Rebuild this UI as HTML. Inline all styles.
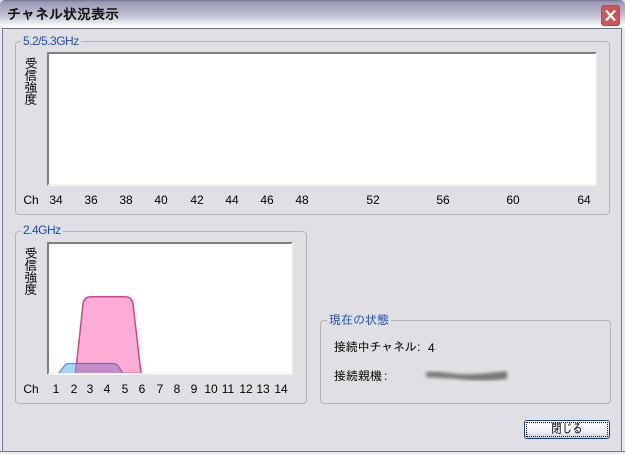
<!DOCTYPE html>
<html><head><meta charset="utf-8"><style>
html,body{margin:0;padding:0;width:625px;height:454px;overflow:hidden;background:#e0dfe3}
body{position:relative;font-family:"Liberation Sans","IPAGothic",sans-serif;font-size:12px;color:#000}
div,span{position:absolute;white-space:nowrap}
.tb{left:0;top:0;width:625px;height:28px;background:linear-gradient(#6f6f8f 0,#9a9ab6 2px,#aeaec6 9px,#c4c4d6 16px,#e4e4ee 22px,#fbfbfd 26px,#fff 27px);border-radius:5px 5px 0 0}
.tl{left:2px;top:28px;width:620px;height:1px;background:#6f6f88}
.lb{left:0;top:28px;width:3px;height:426px;background:linear-gradient(90deg,#e8e8ee 0,#e8e8ee 2px,#77778f 2px)}
.rb{left:621px;top:28px;width:4px;height:426px;background:linear-gradient(90deg,#77778f 0,#77778f 1px,#e8e8ee 1px)}
.bb{left:0;top:451px;width:625px;height:3px;background:linear-gradient(#77778f 0,#77778f 1px,#e8e8ee 1px)}
.bc{left:0;top:452px;width:625px;height:2px;background:#e8e8ee}
.t{left:7px;top:6px;font:bold 14px/16px "IPAGothic","Noto Sans CJK JP",sans-serif;color:#111}
.g{box-sizing:border-box;border:1px solid #b4b4b8;border-radius:4px}
.lg{background:#e0dfe3;color:#1c4fa8;padding:0 2px;font-size:12px;line-height:13px;letter-spacing:-.5px}
.c{background:#fff;box-sizing:border-box;border-top:2px solid #808080;border-left:2px solid #808080;border-right:2px solid #f4f4ec;border-bottom:2px solid #f4f4ec}
.n{font-size:12px;line-height:14px;transform:translateX(-50%);top:0}
.r{top:0;height:14px;left:0;width:625px}
.v{font:13px/12px "IPAGothic","Noto Sans CJK JP",sans-serif;width:14px;text-align:center;white-space:normal}
.j{font:12px/14px "IPAGothic","Noto Sans CJK JP",sans-serif}
</style></head><body>
<div class="tb"></div><div class="tl"></div><div class="lb"></div><div class="rb"></div><div class="bb"></div>
<div class="t">チャネル状況表示</div>
<svg style="position:absolute;left:601px;top:5px" width="19" height="21" viewBox="0 0 19 21"><rect x=".5" y=".5" width="18" height="20" rx="2.5" fill="#c9545a" stroke="#b04a50"/><path d="M5 5.5L14 15.5M14 5.5L5 15.5" stroke="#fff" stroke-width="2.4" fill="none"/></svg>

<div class="g" style="left:15px;top:41px;width:595px;height:174px"></div>
<div class="lg" style="left:21px;top:35px">5.2/5.3GHz</div>
<div class="c" style="left:47px;top:52px;width:550px;height:134px"></div>
<div class="v" style="left:24px;top:58px">受信強度</div>
<div class="r" style="top:193px">
<span class="n" style="left:31px">Ch</span>
<span class="n" style="left:56px">34</span><span class="n" style="left:91px">36</span><span class="n" style="left:126px">38</span><span class="n" style="left:161px">40</span><span class="n" style="left:197px">42</span><span class="n" style="left:232px">44</span><span class="n" style="left:267px">46</span><span class="n" style="left:302px">48</span><span class="n" style="left:373px">52</span><span class="n" style="left:443px">56</span><span class="n" style="left:513px">60</span><span class="n" style="left:584px">64</span>
</div>

<div class="g" style="left:15px;top:231px;width:292px;height:173px"></div>
<div class="lg" style="left:21px;top:224px">2.4GHz</div>
<div class="c" style="left:47px;top:242px;width:246px;height:133px"></div>
<div class="v" style="left:24px;top:248px">受信強度</div>
<svg style="position:absolute;left:49px;top:244px" width="242" height="129" viewBox="49 244 242 129">
<path d="M58.5 373.5L65 365Q66.5 363.5 69 363.5H113Q116 363.5 118 365.5L123 373.5Z" fill="#a8d4f8" stroke="#5c94d0" stroke-width="1.3"/>
<path d="M75.5 373.5L83 304Q84 296.7 91 296.7H125Q132 296.7 133 304L141 373.5Z" fill="#ff9fcf" fill-opacity=".85" stroke="#c84a8e" stroke-width="1.5"/>
<path d="M75.5 373L77 363.5H113Q116 363.5 118 365.5L123 373Z" fill="#c48cc8" stroke="none"/>
<path d="M76.5 363.5H113Q116 363.5 118 365.5L123 373.5" fill="none" stroke="#8a68b0" stroke-width="1.2"/>
<path d="M75.5 373.5H141" stroke="#c84a8e" stroke-width="1" fill="none"/>
</svg>
<div class="r" style="top:382px">
<span class="n" style="left:31px">Ch</span>
<span class="n" style="left:56px">1</span><span class="n" style="left:74px">2</span><span class="n" style="left:90px">3</span><span class="n" style="left:107px">4</span><span class="n" style="left:125px">5</span><span class="n" style="left:142px">6</span><span class="n" style="left:160px">7</span><span class="n" style="left:177px">8</span><span class="n" style="left:194px">9</span><span class="n" style="left:211px">10</span><span class="n" style="left:228px">11</span><span class="n" style="left:246px">12</span><span class="n" style="left:263px">13</span><span class="n" style="left:281px">14</span>
</div>

<div class="g" style="left:320px;top:320px;width:291px;height:84px"></div>
<div class="lg j" style="left:327px;top:313px;color:#1c4fa8;font-size:12px;letter-spacing:0">現在の状態</div>
<div class="j" style="left:334px;top:340px;letter-spacing:-.2px">接続中チャネル</div>
<div style="left:417px;top:340px;line-height:14px">:</div>
<div style="left:428px;top:341px;line-height:14px">4</div>
<div class="j" style="left:334px;top:369px">接続親機</div>
<div style="left:384px;top:369px;line-height:14px">:</div>
<svg style="position:absolute;left:420px;top:362px" width="95" height="28"><defs><filter id="b"><feGaussianBlur stdDeviation="1.5"/></filter></defs><path d="M6 10C20 9 26 11 38 12C52 13 70 11 87 9V17C70 19 52 19 38 17C26 16 18 16 6 15Z" fill="#777" filter="url(#b)"/></svg>

<div style="left:524px;top:420px;width:86px;height:19px;box-sizing:border-box;border:1px solid #1f3f6f;border-radius:3px;background:linear-gradient(#fff,#f2f2f6 60%,#c8cce0)"></div>
<div style="left:526px;top:422px;width:82px;height:15px;box-sizing:border-box;border:1px dotted #222"></div>
<div class="j" style="left:524px;top:422px;width:86px;text-align:center;font-size:13px;transform:scaleX(.8)">閉じる</div>
</body></html>
